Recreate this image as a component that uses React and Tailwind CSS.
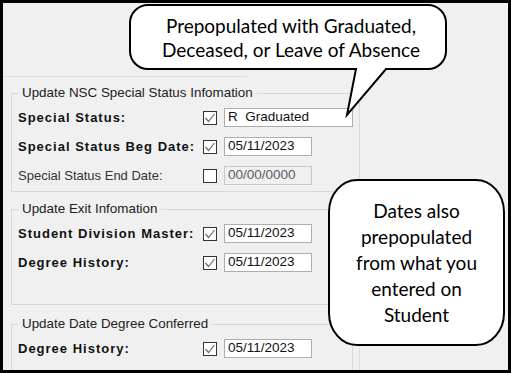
import React from "react";

const GROUPS = [
  {
    title: "Update NSC Special Status Infomation",
    pb: "pb-[6px]",
    mt: "mt-[8px]",
    rows: [
      { label: "Special Status:", bold: true, checked: true, value: "R  Graduated", wide: true },
      { label: "Special Status Beg Date:", bold: true, checked: true, value: "05/11/2023" },
      { label: "Special Status End Date:", bold: false, checked: false, value: "00/00/0000", disabled: true },
    ],
  },
  {
    title: "Update Exit Infomation",
    pb: "pb-[32px]",
    mt: "mt-[9px]",
    rows: [
      { label: "Student Division Master:", bold: true, checked: true, value: "05/11/2023" },
      { label: "Degree History:", bold: true, checked: true, value: "05/11/2023" },
    ],
  },
  {
    title: "Update Date Degree Conferred",
    pb: "pb-[20px]",
    mt: "mt-[11px]",
    rows: [{ label: "Degree History:", bold: true, checked: true, value: "05/11/2023" }],
  },
];

function CheckBox({ checked }) {
  return (
    <span className="w-[14px] h-[14px] border border-[#333333] bg-white flex items-center justify-center shrink-0">
      {checked && (
        <svg width="12" height="12" viewBox="0 0 12 12">
          <path d="M1.5 6 L4.5 9.5 L10.5 2" fill="none" stroke="#6a6a6a" strokeWidth="1.2" />
        </svg>
      )}
    </span>
  );
}

function Row({ row }) {
  return (
    <div className="flex items-center h-[19px]">
      <span
        className={`w-[185px] shrink-0 whitespace-nowrap ${
          row.bold
            ? "font-bold text-[13px] tracking-[1px] text-[#111111]"
            : "text-[13px] text-[#333333]"
        }`}
      >
        {row.label}
      </span>
      <CheckBox checked={row.checked} />
      <span
        className={`ml-[7px] h-[19px] flex items-center pl-[3px] text-[13.5px] whitespace-pre border ${
          row.wide ? "w-[129px]" : "w-[88px]"
        } ${
          row.disabled
            ? "bg-[#f0f0f0] border-[#c8c8c8] text-[#5a5a6a]"
            : "bg-white border-[#adadad] text-[#111111]"
        }`}
      >
        {row.value}
      </span>
    </div>
  );
}

function Group({ group }) {
  return (
    <fieldset className={`w-[342px] border border-[#d8d8d8] px-[6px] pt-[7px] ${group.pb} ${group.mt}`}>
      <legend className="px-[4px] text-[13.4px] text-[#222222] leading-[16px]">{group.title}</legend>
      <div className="flex flex-col gap-[10px]">
        {group.rows.map((row, i) => (
          <Row key={i} row={row} />
        ))}
      </div>
    </fieldset>
  );
}

export default function App() {
  return (
    <div className="relative w-[511px] h-[373px] border-[3px] border-black bg-[#f0f0f0] overflow-hidden font-['Liberation_Sans',Arial,sans-serif]">
      {/* form area */}
      <div className="flex flex-col h-full">
        <div className="h-[74px] shrink-0">
          <div className="w-[244px] h-full border-b border-[#dcdcdc]" />
        </div>
        <div className="flex flex-1">
          <div className="w-[357px] border-r border-[#e2e2e2] pl-[8px]">
            {GROUPS.map((g) => (
              <Group key={g.title} group={g} />
            ))}
          </div>
        </div>
      </div>

      {/* callout bubbles */}
      <svg
        className="absolute -top-[3px] -left-[3px] pointer-events-none"
        width="511"
        height="373"
        viewBox="0 0 511 373"
      >
        <path
          d="M148 5 H428 A18 18 0 0 1 446 23 V51 A18 18 0 0 1 428 69 H386 L347 115 L356 69 H148 A18 18 0 0 1 130 51 V23 A18 18 0 0 1 148 5 Z"
          fill="white"
          stroke="black"
          strokeWidth="2"
        />
        <rect x="329" y="180" width="175" height="165" rx="28" ry="32" fill="white" stroke="black" strokeWidth="2" />
      </svg>
      <div className="absolute -top-[3px] left-[127px] w-[322px] h-[76px] flex flex-col items-center justify-center text-[19px] leading-[24px] text-black font-['Lato','Open_Sans',sans-serif]">
        <span>Prepopulated with Graduated,</span>
        <span>Deceased, or Leave of Absence</span>
      </div>
      <div className="absolute top-[177px] left-[326px] w-[175px] h-[165px] flex flex-col items-center justify-center text-[19px] leading-[26px] text-black font-['Lato','Open_Sans',sans-serif]">
        <span>Dates also</span>
        <span>prepopulated</span>
        <span>from what you</span>
        <span>entered on</span>
        <span>Student</span>
      </div>
    </div>
  );
}
